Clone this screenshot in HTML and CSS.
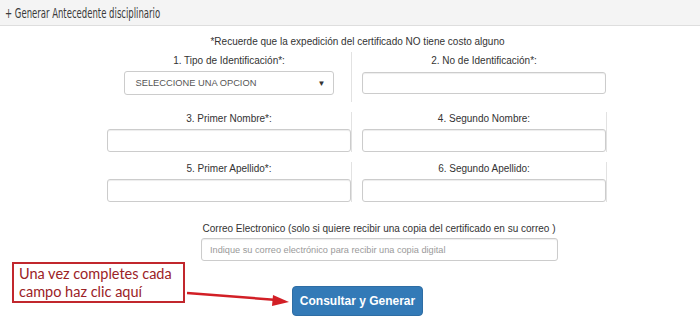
FILE: index.html
```html
<!DOCTYPE html>
<html lang="es">
<head>
<meta charset="utf-8">
<title>Generar Antecedente disciplinario</title>
<link rel="stylesheet" href="styles.css">
</head>
<body>
<div class="header"><span class="header-title">+ Generar Antecedente disciplinario</span></div>
<div class="main">
  <p class="note">*Recuerde que la expedición del certificado NO tiene costo alguno</p>
  <div class="form-grid">
    <div class="cell cell-first">
      <label class="lbl">1. Tipo de Identificación*:</label>
      <div class="select"><span>SELECCIONE UNA OPCION</span><span class="caret">▼</span></div>
    </div>
    <div class="cell cell-first no-line">
      <label class="lbl">2. No de Identificación*:</label>
      <div class="input input-first"></div>
    </div>
    <div class="cell">
      <label class="lbl">3. Primer Nombre*:</label>
      <div class="input"></div>
    </div>
    <div class="cell">
      <label class="lbl">4. Segundo Nombre:</label>
      <div class="input"></div>
    </div>
    <div class="cell">
      <label class="lbl">5. Primer Apellido*:</label>
      <div class="input"></div>
    </div>
    <div class="cell">
      <label class="lbl">6. Segundo Apellido:</label>
      <div class="input"></div>
    </div>
  </div>
  <div class="email">
    <label class="lbl">Correo Electronico (solo si quiere recibir una copia del certificado en su correo )</label>
    <div class="input email-input"><span class="placeholder">Indique su correo electrónico para recibir una copia digital</span></div>
  </div>
  <div class="actions">
    <button class="btn">Consultar y Generar</button>
  </div>
</div>
<div class="callout">Una vez completes cada<br>campo haz clic aquí</div>
<svg class="arrow" width="110" height="24" viewBox="0 0 110 24">
  <line x1="2" y1="8" x2="92" y2="15" stroke="#d21f26" stroke-width="2.5"/>
  <polygon points="104,17 88,10 87,21" fill="#d21f26"/>
</svg>
</body>
</html>
```
FILE: styles.css
```css
html, body {
  margin: 0;
  padding: 0;
  background: #ffffff;
  font-family: "Liberation Sans", Arial, sans-serif;
  color: #333333;
}

.header {
  height: 25px;
  background: #f4f4f4;
  border-bottom: 1px solid #dedede;
  display: flex;
  align-items: center;
  padding-left: 5px;
}

.header-title {
  font-family: "Liberation Sans Narrow", "DejaVu Sans Condensed", "Liberation Sans", sans-serif;
  font-stretch: condensed;
  font-size: 13.5px;
  color: #3a3a3a;
  display: inline-block;
  transform: scaleX(0.7);
  transform-origin: left center;
  white-space: nowrap;
}

.main {
  position: relative;
}

.note {
  margin: 10px 0 0 0;
  line-height: 12px;
  font-size: 10px;
  text-align: center;
  padding-left: 15px;
  color: #333;
}

.form-grid {
  margin: 4px 0 0 107px;
  display: grid;
  grid-template-columns: 245px 245px;
  column-gap: 10px;
  row-gap: 10px;
  width: 500px;
}

.cell {
  box-sizing: border-box;
  border-right: 1px solid #e2e2e2;
  display: flex;
  flex-direction: column;
  align-items: stretch;
}

.cell-first {
  padding-top: 2px;
  padding-bottom: 7px;
}

.no-line {
  border-right-color: transparent;
}

.lbl {
  display: block;
  font-size: 10px;
  line-height: 14px;
  text-align: center;
  color: #333;
  margin-bottom: 3px;
  white-space: nowrap;
}

.input {
  box-sizing: border-box;
  height: 23px;
  width: 244px;
  border: 1px solid #cccccc;
  border-radius: 3px;
  box-shadow: inset 0 1px 1px rgba(0,0,0,0.075);
  background: #fff;
}

.input-first {
  height: 22px;
  margin-top: 1px;
}

.select {
  box-sizing: border-box;
  align-self: center;
  width: 210px;
  height: 24px;
  margin-left: -1px;
  border: 1px solid #cccccc;
  border-radius: 3px;
  display: flex;
  align-items: center;
  justify-content: space-between;
  padding: 0 7px 0 11px;
  font-size: 9.3px;
  color: #555;
  background: #fff;
}

.caret {
  font-size: 8px;
  color: #333;
}

.email {
  margin: 20px 0 0 200px;
  width: 358px;
}

.email .lbl {
  margin-bottom: 2px;
}

.email-input {
  width: 357px;
  margin-left: 1px;
  display: flex;
  align-items: center;
  padding-left: 8px;
}

.placeholder {
  font-size: 9.2px;
  color: #9a9a9a;
  white-space: nowrap;
}

.actions {
  margin: 25px 0 0 292px;
}

.btn {
  width: 131px;
  height: 30px;
  background: #337ab7;
  border: 1px solid #2e6da4;
  border-radius: 4px;
  color: #fff;
  font-family: "Liberation Sans", Arial, sans-serif;
  font-weight: bold;
  font-size: 12px;
  padding: 0;
}

.callout {
  position: absolute;
  left: 12px;
  top: 262px;
  width: 173px;
  height: 41px;
  box-sizing: border-box;
  border: 2px solid #c1272d;
  background: #fff;
  padding: 1px 0 0 5px;
  font-family: Lato, "Open Sans", sans-serif;
  font-size: 14.5px;
  line-height: 18px;
  color: #9b2226;
  white-space: nowrap;
}

.arrow {
  position: absolute;
  left: 185px;
  top: 285px;
}
```
